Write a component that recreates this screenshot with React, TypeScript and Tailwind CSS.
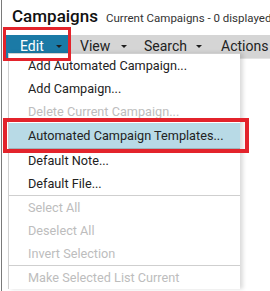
import React from "react"

const items = [
  { label: "Add Automated Campaign...", disabled: false },
  { label: "Add Campaign...", disabled: false },
  { label: "Delete Current Campaign...", disabled: true },
]

function Caret() {
  return <span className="block w-0 h-0 border-x-[3px] border-t-[3px] border-x-transparent border-t-[#1e1e1e]" />
}

function Row({ label, disabled }: { label: string; disabled?: boolean }) {
  return (
    <div className={`h-[23px] flex items-center pl-[19px] text-[12.7px] ${disabled ? "text-[#bdbdbd]" : "text-[#222]"}`}>
      {label}
    </div>
  )
}

export default function App() {
  return (
    <div className="relative w-[270px] h-[291px] overflow-hidden bg-white pl-px font-['Roboto',sans-serif]">
      <div className="h-full border-l border-[#7a7a7a]">
        <div className="pt-[6px] pl-[10px] flex items-baseline gap-[8px] whitespace-nowrap">
          <span className="text-[17px] leading-[20px] font-medium text-[#111]">Campaigns</span>
          <span className="text-[11.5px] text-[#333]">Current Campaigns - 0 displayed</span>
        </div>

        <div className="mt-[8px] ml-[3px] h-[23px] bg-[#d5d5d5] flex items-stretch text-[14px] text-[#222] whitespace-nowrap">
          <div className="w-[63px] flex items-center pl-[15px] bg-[#1b7aa6] text-white">
            Edit
            <span className="ml-auto mr-[6px]"><Caret /></span>
          </div>
          <div className="w-[64px] flex items-center pl-[12px]">
            View
            <span className="ml-auto mr-[5px]"><Caret /></span>
          </div>
          <div className="w-[77px] flex items-center pl-[12px]">
            Search
            <span className="ml-auto mr-[7px]"><Caret /></span>
          </div>
          <div className="flex items-center pl-[12px]">Actions</div>
        </div>
        <div className="ml-[3px] h-px bg-[#e4e4e4]" />
      </div>

      {/* dropdown */}
      <div className="absolute left-[8px] top-[53px] w-[232px] bg-white border-t border-l border-[#d0d0d0] shadow-[3px_0_4px_rgba(0,0,0,0.14)] whitespace-nowrap">
        {items.map((it) => (
          <Row key={it.label} label={it.label} disabled={it.disabled} />
        ))}
        <div className="h-[26px] flex items-center pl-[19px] text-[12.7px] text-[#222] bg-[#b8dae6] border-b border-[#9fb3ba]">
          Automated Campaign Templates...
        </div>
        <Row label="Default Note..." />
        <Row label="Default File..." />
        <div className="h-px bg-[#cfcfcf]" />
        <Row label="Select All" disabled />
        <Row label="Deselect All" disabled />
        <Row label="Invert Selection" disabled />
        <div className="h-px bg-[#cfcfcf]" />
        <Row label="Make Selected List Current" disabled />
      </div>

      {/* annotation boxes */}
      <div className="absolute left-[3px] top-[27px] w-[68px] h-[34px] border-[3px] border-[#e3232b]" />
      <div className="absolute left-[3px] top-[118px] w-[246px] h-[35px] border-[4px] border-[#e3232b]" />
    </div>
  )
}
